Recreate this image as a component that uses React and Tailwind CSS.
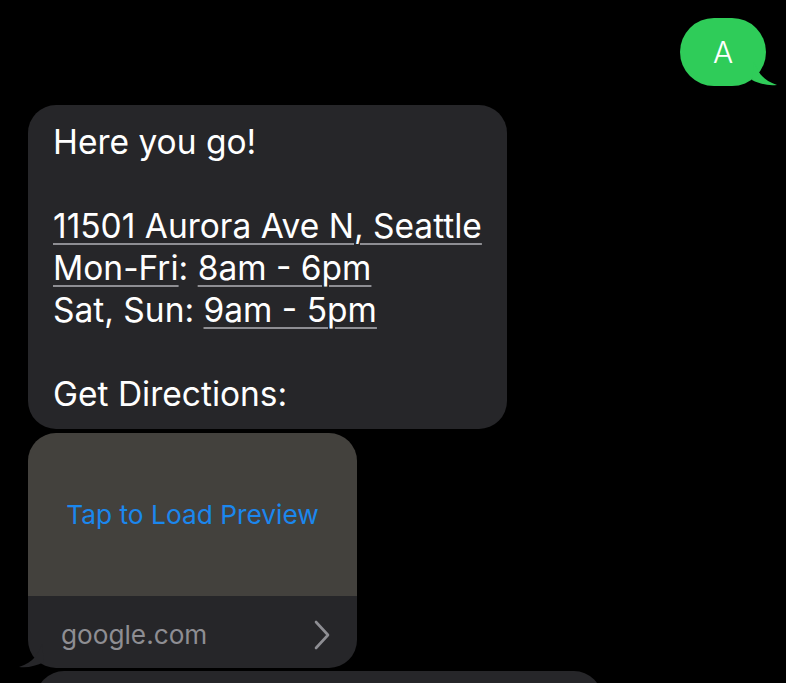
import React from 'react';

const font = { fontFamily: 'Inter, "Liberation Sans", sans-serif' };

const Link = ({ children }) => (
  <span className="underline decoration-[#8e8e93] decoration-2 underline-offset-[5px]">{children}</span>
);

export default function App() {
  return (
    <div className="w-[786px] h-[683px] bg-black overflow-hidden flex flex-col" style={font}>
      {/* outgoing */}
      <div className="flex justify-end pt-[18px] pr-[20px]">
        <div className="relative">
          <div className="w-[86px] h-[68px] rounded-full bg-[#2fcc59] flex items-center justify-center text-white text-[30px] font-light">
            A
          </div>
          <svg className="absolute right-[-12px] bottom-0" width="26" height="24" viewBox="0 0 26 24">
            <path d="M2 0 C6 10 10 18 25 23 C16 24 8 22 0 18 Z" fill="#2fcc59" />
          </svg>
        </div>
      </div>

      {/* incoming text */}
      <div className="ml-[28px] mt-[19px] w-fit rounded-[28px] bg-[#262629] px-[25px] pt-[16px] pb-[14px] text-white text-[33.5px] leading-[42px]">
        <div>Here you go!</div>
        <div className="h-[42px]" />
        <div><Link>11501 Aurora Ave N, Seattle</Link></div>
        <div><Link>Mon-Fri</Link>: <Link>8am - 6pm</Link></div>
        <div>Sat, Sun: <Link>9am - 5pm</Link></div>
        <div className="h-[42px]" />
        <div>Get Directions:</div>
      </div>

      {/* link preview */}
      <div className="relative ml-[28px] mt-[4px] w-[329px]">
        <div className="rounded-[28px] overflow-hidden">
          <div className="h-[163px] bg-[#43413d] flex items-center justify-center text-[#1b87ee] text-[26.3px]">
            Tap to Load Preview
          </div>
          <div className="h-[72px] bg-[#262629] flex items-center justify-between pl-[33px] pr-[26px] pt-[5px]">
            <span className="text-[#8e8e93] text-[26.2px]">google.com</span>
            <svg width="18" height="30" viewBox="0 0 18 30" fill="none">
              <path d="M3 2 L15 15 L3 28" stroke="#8e8e93" strokeWidth="2.6" strokeLinecap="round" strokeLinejoin="round" />
            </svg>
          </div>
        </div>
        <svg className="absolute left-[-10px] bottom-0" width="26" height="24" viewBox="0 0 26 24">
          <path d="M24 0 C20 10 16 18 1 23 C10 24 18 22 26 18 Z" fill="#262629" />
        </svg>
      </div>

      {/* next incoming, cut off */}
      <div className="ml-[36px] mt-[3px] w-[566px] h-[60px] rounded-[28px] bg-[#262629] shrink-0" />
    </div>
  );
}
